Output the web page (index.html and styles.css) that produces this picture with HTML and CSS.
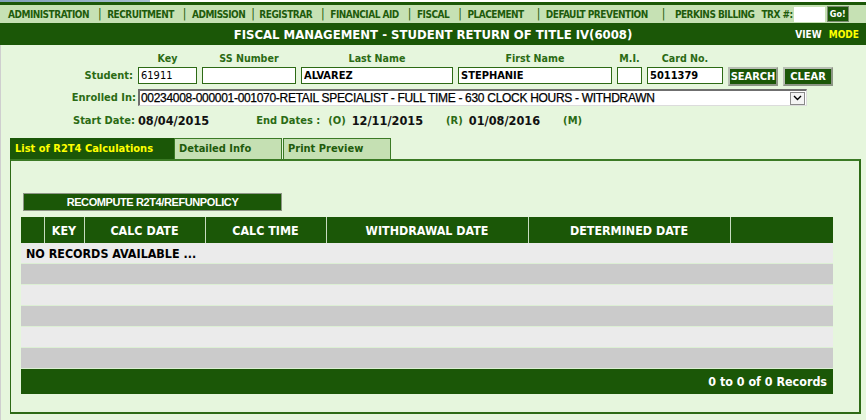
FILE: index.html
```html
<!DOCTYPE html>
<html>
<head>
    <title>Fiscal Management - Student Return of Title IV</title>
    <link rel="stylesheet" href="styles.css">
</head>
<body>
    <div class="topstrip"><div class="logo-strip"></div></div>

    <div class="nav">
        <a class="nav-item">ADMINISTRATION</a><span class="sep">|</span>
        <a class="nav-item">RECRUITMENT</a><span class="sep">|</span>
        <a class="nav-item">ADMISSION</a><span class="sep tight">|</span>
        <a class="nav-item">REGISTRAR</a><span class="sep">|</span>
        <a class="nav-item">FINANCIAL AID</a><span class="sep">|</span>
        <a class="nav-item">FISCAL</a><span class="sep">|</span>
        <a class="nav-item">PLACEMENT</a><span class="sep loose">|</span>
        <a class="nav-item">DEFAULT PREVENTION</a><span class="sep looser">|</span>
        <a class="nav-item">PERKINS BILLING</a>
        <span class="trx-label">TRX #:</span><input class="trx-input" type="text"><button class="go-btn">Go!</button>
    </div>

    <div class="titlebar">
        <div class="title">FISCAL MANAGEMENT - STUDENT RETURN OF TITLE IV(6008)</div>
        <div class="mode"><span>VIEW</span> <span class="mode-yellow">MODE</span></div>
    </div>

    <div class="main">
        <div class="student-grid">
            <span></span>
            <span class="col-label">Key</span>
            <span class="col-label">SS Number</span>
            <span class="col-label">Last Name</span>
            <span class="col-label">First Name</span>
            <span class="col-label">M.I.</span>
            <span class="col-label">Card No.</span>
            <span></span>
            <span></span>

            <label class="row-label">Student:</label>
            <input class="field plain" type="text" value="61911">
            <input class="field" type="text" value="">
            <input class="field" type="text" value="ALVAREZ">
            <input class="field" type="text" value="STEPHANIE">
            <input class="field" type="text" value="">
            <input class="field" type="text" value="5011379">
            <button class="dark-btn">SEARCH</button>
            <button class="dark-btn">CLEAR</button>
        </div>

        <div class="enrolled-row">
            <label class="row-label">Enrolled In:</label>
            <div class="select-box">
                <span class="select-text">00234008-000001-001070-RETAIL SPECIALIST - FULL TIME - 630 CLOCK HOURS - WITHDRAWN</span>
                <span class="select-arrow">
                    <svg width="9" height="6" viewBox="0 0 9 6"><path d="M1 1 L4.5 4.5 L8 1" fill="none" stroke="#000" stroke-width="1.4"/></svg>
                </span>
            </div>
        </div>

        <div class="dates-row">
            <span class="date-label">Start Date:</span>
            <span class="date-value start">08/04/2015</span>
            <span class="date-label">End Dates :</span>
            <span class="date-label tag">(O)</span>
            <span class="date-value">12/11/2015</span>
            <span class="date-label tag wide">(R)</span>
            <span class="date-value">01/08/2016</span>
            <span class="date-label tag wide">(M)</span>
        </div>

        <div class="tabs">
            <div class="tab active">List of R2T4 Calculations</div>
            <div class="tab tab-detail">Detailed Info</div>
            <div class="tab tab-print">Print Preview</div>
        </div>

        <div class="panel">
            <button class="recompute-btn">RECOMPUTE R2T4/REFUNPOLICY</button>

            <table class="r2t4-table">
                <colgroup>
                    <col style="width:23px">
                    <col style="width:40px">
                    <col style="width:121px">
                    <col style="width:121px">
                    <col style="width:202px">
                    <col style="width:202px">
                    <col>
                </colgroup>
                <thead>
                    <tr>
                        <th></th>
                        <th>KEY</th>
                        <th>CALC DATE</th>
                        <th>CALC TIME</th>
                        <th>WITHDRAWAL DATE</th>
                        <th>DETERMINED DATE</th>
                        <th></th>
                    </tr>
                </thead>
                <tbody>
                    <tr class="light"><td colspan="7" class="empty">NO RECORDS AVAILABLE ...</td></tr>
                    <tr class="dark"><td colspan="7"></td></tr>
                    <tr class="light"><td colspan="7"></td></tr>
                    <tr class="dark"><td colspan="7"></td></tr>
                    <tr class="light"><td colspan="7"></td></tr>
                    <tr class="dark"><td colspan="7"></td></tr>
                </tbody>
                <tfoot>
                    <tr><td colspan="7">0 to 0 of 0 Records</td></tr>
                </tfoot>
            </table>
        </div>
    </div>
</body>
</html>
```

FILE: styles.css
```css
body {
    margin: 0;
    font-family: "DejaVu Sans Condensed", "DejaVu Sans", sans-serif;
    font-size: 11px;
    background-color: #e6f6dd;
    width: 866px;
    height: 420px;
    overflow: hidden;
}

.topstrip {
    height: 2px;
    background-color: #fff;
}

.logo-strip {
    width: 150px;
    height: 2px;
    background: linear-gradient(to right, #7f9fb8, #a9c0d2);
}

.nav {
    display: flex;
    align-items: center;
    height: 18px;
    border-top: 3px solid #1b5707;
    background-color: #c6e1b4;
    padding-left: 8px;
    font-size: 10px;
    letter-spacing: -0.5px;
    font-weight: bold;
    color: #1e5b0c;
    white-space: nowrap;
}

.nav > * {
    flex-shrink: 0;
}

.sep {
    font-weight: normal;
    font-size: 12px;
    margin: 0 6px 0 9px;
    color: #1e5b0c;
}

.sep.tight {
    margin: 0 5px 0 6px;
}

.sep.loose {
    margin-left: 13px;
}

.sep.looser {
    margin: 0 10px 0 14px;
}

.trx-label {
    margin-left: 7px;
}

.trx-input {
    width: 29px;
    height: 13px;
    padding: 0;
    border: 1px solid #fff;
    margin-left: 1px;
    font-size: 10px;
}

.go-btn {
    margin-left: 2px;
    width: 22px;
    height: 16px;
    padding: 0;
    font-family: inherit;
    font-size: 9px;
    letter-spacing: 0;
    font-weight: bold;
    color: #fff;
    background-color: #1b5707;
    border: 1px solid #7a8a70;
}

.titlebar {
    display: grid;
    grid-template-columns: 1fr auto 1fr;
    align-items: center;
    height: 22px;
    background-color: #1b5707;
    color: #fff;
    font-weight: bold;
}

.title {
    grid-column: 2;
    font-size: 13px;
}

.mode {
    grid-column: 3;
    justify-self: end;
    padding-right: 7px;
    font-size: 10px;
}

.mode-yellow {
    color: #ffff00;
    margin-left: 4px;
}

.main {
    height: 375px;
    border-left: 1px solid #cfcfcf;
    padding-top: 6px;
    box-sizing: border-box;
    color: #2b6b14;
}

.student-grid {
    display: grid;
    grid-template-columns: 124px 59px 94px 152px 154px 25px 76px 50px 50px;
    grid-template-rows: 14px 19px;
    column-gap: 5px;
    row-gap: 2px;
    margin-left: 8px;
    align-items: start;
}

.col-label {
    text-align: center;
    font-weight: bold;
    font-size: 10.6px;
    line-height: 14px;
}

.row-label {
    text-align: right;
    font-weight: bold;
    line-height: 17px;
}

.field {
    box-sizing: border-box;
    width: 100%;
    height: 17px;
    padding: 0 2px;
    border: 1px solid #2d6a15;
    background-color: #fff;
    font-family: inherit;
    font-size: 11px;
    font-weight: bold;
    color: #000;
}

.field.plain {
    font-weight: normal;
}

.dark-btn {
    box-sizing: border-box;
    height: 19px;
    padding: 0;
    font-family: inherit;
    font-size: 11px;
    font-weight: bold;
    color: #fff;
    background-color: #1b5707;
    border: 2px solid #8d9686;
    border-top-color: #b8beb3;
    border-left-color: #b8beb3;
}

.enrolled-row {
    display: flex;
    margin-top: 3px;
    margin-left: 8px;
}

.enrolled-row .row-label {
    width: 127px;
}

.select-box {
    box-sizing: border-box;
    display: flex;
    align-items: center;
    justify-content: space-between;
    margin-left: 2px;
    width: 669px;
    height: 17px;
    background-color: #fff;
    border-top: 2px solid #6f6f6f;
    border-left: 2px solid #6f6f6f;
    border-right: 1px solid #dcdcdc;
    border-bottom: 1px solid #dcdcdc;
}

.select-text {
    font-family: "Liberation Sans", Arial, sans-serif;
    font-size: 12px;
    letter-spacing: -0.3px;
    color: #000;
    padding-left: 1px;
    white-space: nowrap;
    -webkit-text-stroke: 0.25px #000;
}

.select-arrow {
    box-sizing: border-box;
    display: flex;
    align-items: center;
    justify-content: center;
    width: 15px;
    height: 13px;
    margin-right: 1px;
    border: 1px solid #8a8a8a;
    background-color: #f4f4f4;
}

.dates-row {
    display: flex;
    align-items: center;
    height: 14px;
    margin-top: 7px;
    margin-left: 72px;
    font-weight: bold;
}

.date-label {
    color: #2b6b14;
}

.date-value {
    color: #111;
    font-size: 12.6px;
    margin-left: 6px;
}

.date-value.start {
    margin-left: 3px;
    margin-right: 47px;
}

.tag {
    margin-left: 8px;
}

.tag.wide {
    margin-left: 23px;
}

.tabs {
    display: flex;
    margin-top: 11px;
    margin-left: 9px;
}

.tab {
    box-sizing: border-box;
    height: 21px;
    line-height: 19px;
    padding-left: 4px;
    font-weight: bold;
    color: #1e5b0c;
    background-color: #c5e0b3;
    border: 1px solid #3b7a25;
    border-bottom: none;
}

.tab.active {
    width: 164px;
    color: #ffff00;
    background-color: #1b5707;
    border-color: #1b5707;
}

.tab-detail {
    width: 108px;
}

.tab-print {
    width: 108px;
    margin-left: 1px;
}

.panel {
    box-sizing: border-box;
    width: 851px;
    height: 255px;
    margin-left: 9px;
    padding: 32px 0 0 10px;
    border-top: 2px solid #3b7a25;
    border-left: 1px solid #2d6a15;
    border-right: 2px solid #2d6a15;
    border-bottom: 2px solid #2d6a15;
}

.recompute-btn {
    box-sizing: border-box;
    display: block;
    margin-left: 2px;
    width: 259px;
    height: 18px;
    padding: 0;
    font-family: "Liberation Sans", Arial, sans-serif;
    font-size: 11px;
    font-weight: bold;
    letter-spacing: -0.4px;
    color: #fff;
    background-color: #1b5707;
    border: 1px solid #8d9686;
}

.r2t4-table {
    width: 812px;
    margin-top: 6px;
    table-layout: fixed;
    border-collapse: collapse;
}

.r2t4-table th {
    height: 26px;
    padding: 0;
    background-color: #1b5707;
    color: #fff;
    font-size: 12.4px;
    font-weight: bold;
    border-left: 1px solid #c8dcc0;
}

.r2t4-table th:first-child {
    border-left: none;
}

.r2t4-table tbody td {
    height: 20px;
    padding: 0 5px;
    border-bottom: 1px solid #dcefd4;
    color: #000;
    font-size: 12.4px;
    font-weight: bold;
}

.r2t4-table tr.light td {
    background-color: #ebebeb;
}

.r2t4-table tr.dark td {
    background-color: #cbcbcb;
}

.r2t4-table tfoot td {
    height: 25px;
    padding: 0 6px;
    background-color: #1b5707;
    color: #fff;
    font-size: 12.4px;
    font-weight: bold;
    text-align: right;
}
```
